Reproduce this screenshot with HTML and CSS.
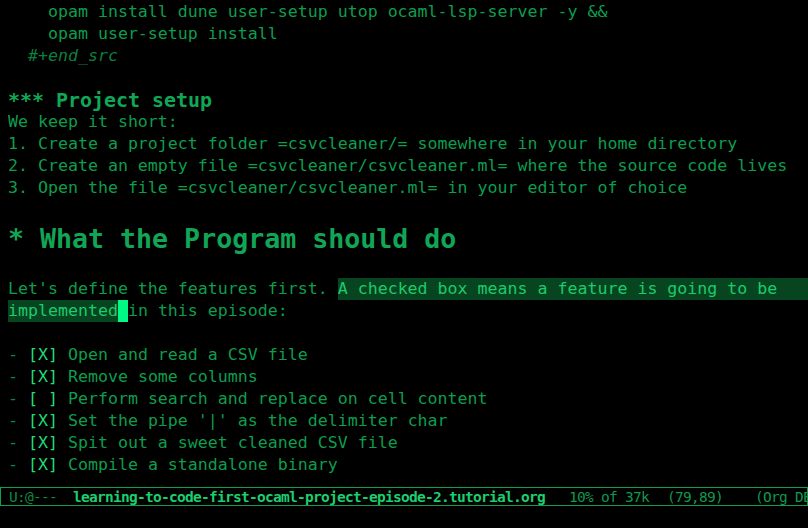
FILE: index.html
```html
<!DOCTYPE html>
<html lang="en">
<head>
<meta charset="utf-8">
<title>learning-to-code-first-ocaml-project-episode-2.tutorial.org</title>
<link rel="stylesheet" href="styles.css">
</head>
<body>
<div class="frame">
  <div class="buffer">
    <div class="line">    opam install dune user-setup utop ocaml-lsp-server -y &amp;&amp;</div>
    <div class="line">    opam user-setup install</div>
    <div class="line"><span class="meta">  #+end_src</span></div>
    <div class="line"> </div>
    <div class="line h3">*** Project setup</div>
    <div class="line">We keep it short:</div>
    <div class="line">1. Create a project folder =csvcleaner/= somewhere in your home directory</div>
    <div class="line">2. Create an empty file =csvcleaner/csvcleaner.ml= where the source code lives</div>
    <div class="line">3. Open the file =csvcleaner/csvcleaner.ml= in your editor of choice</div>
    <div class="line"> </div>
    <div class="line h1">* What the Program should do</div>
    <div class="line"> </div>
    <div class="line flexline"><span>Let's define the features first. </span><span class="hl grow">A checked box means a feature is going to be </span></div>
    <div class="line"><span class="hl">implemented</span><span class="cursor"> </span>in this episode:</div>
    <div class="line"> </div>
    <div class="line"><span class="dash">- </span><span class="box">[X]</span> Open and read a CSV file</div>
    <div class="line"><span class="dash">- </span><span class="box">[X]</span> Remove some columns</div>
    <div class="line"><span class="dash">- </span><span class="box">[ ]</span> Perform search and replace on cell content</div>
    <div class="line"><span class="dash">- </span><span class="box">[X]</span> Set the pipe '|' as the delimiter char</div>
    <div class="line"><span class="dash">- </span><span class="box">[X]</span> Spit out a sweet cleaned CSV file</div>
    <div class="line"><span class="dash">- </span><span class="box">[X]</span> Compile a standalone binary</div>
  </div>
  <div class="modeline">
    <span class="ml-seg ml-state"> U:@---</span>
    <span class="ml-seg ml-file">learning-to-code-first-ocaml-project-episode-2.tutorial.org</span>
    <span class="ml-seg ml-size">10% of 37k</span>
    <span class="ml-seg ml-pos">(79,89)</span>
    <span class="ml-seg ml-mode">(Org DE</span>
  </div>
  <div class="echo"></div>
</div>
</body>
</html>
```
FILE: styles.css
```css
html, body {
  margin: 0;
  padding: 0;
  background: #000;
}

.frame {
  width: 808px;
  height: 528px;
  overflow: hidden;
  display: flex;
  flex-direction: column;
  font-family: "DejaVu Sans Mono", "Liberation Mono", monospace;
  color: #0d9d4d;
}

.buffer {
  height: 487px;
  padding-left: 8px;
  padding-top: 1px;
  overflow: hidden;
  box-sizing: border-box;
}

.line {
  height: 22px;
  line-height: 22px;
  font-size: 16.6px;
  white-space: pre;
  overflow: hidden;
}

.flexline {
  display: flex;
}

.meta {
  font-style: italic;
  color: #0b7f3e;
}

.h3 {
  font-size: 19.95px;
  font-weight: bold;
  color: #10a856;
}

.h1 {
  height: 35px;
  line-height: 36px;
  font-size: 26.6px;
  font-weight: bold;
  color: #11a655;
}

.hl {
  display: inline-block;
  height: 22px;
  background: #06451f;
  color: #1ccb6c;
}

.grow {
  flex: 1;
}

.cursor {
  display: inline-block;
  width: 10px;
  height: 22px;
  background: #00f984;
}

.dash {
  color: #0a8a44;
}

.box {
  color: #1fdc78;
}

.modeline {
  height: 17px;
  border: 1px solid #10a050;
  display: flex;
  line-height: 19px;
  font-size: 14.5px;
  letter-spacing: -0.73px;
  white-space: pre;
  overflow: hidden;
  color: #0d9a4c;
}

.ml-seg {
  flex: none;
  overflow: hidden;
}

.ml-state {
  width: 72px;
  color: #0a8a44;
}

.ml-file {
  width: 496px;
  font-weight: bold;
  color: #1ccf6e;
}

.ml-size {
  width: 98px;
}

.ml-pos {
  width: 88px;
}

.ml-mode {
  flex: 1;
  min-width: 0;
}

.echo {
  flex: 1;
  background: #000;
}
```
